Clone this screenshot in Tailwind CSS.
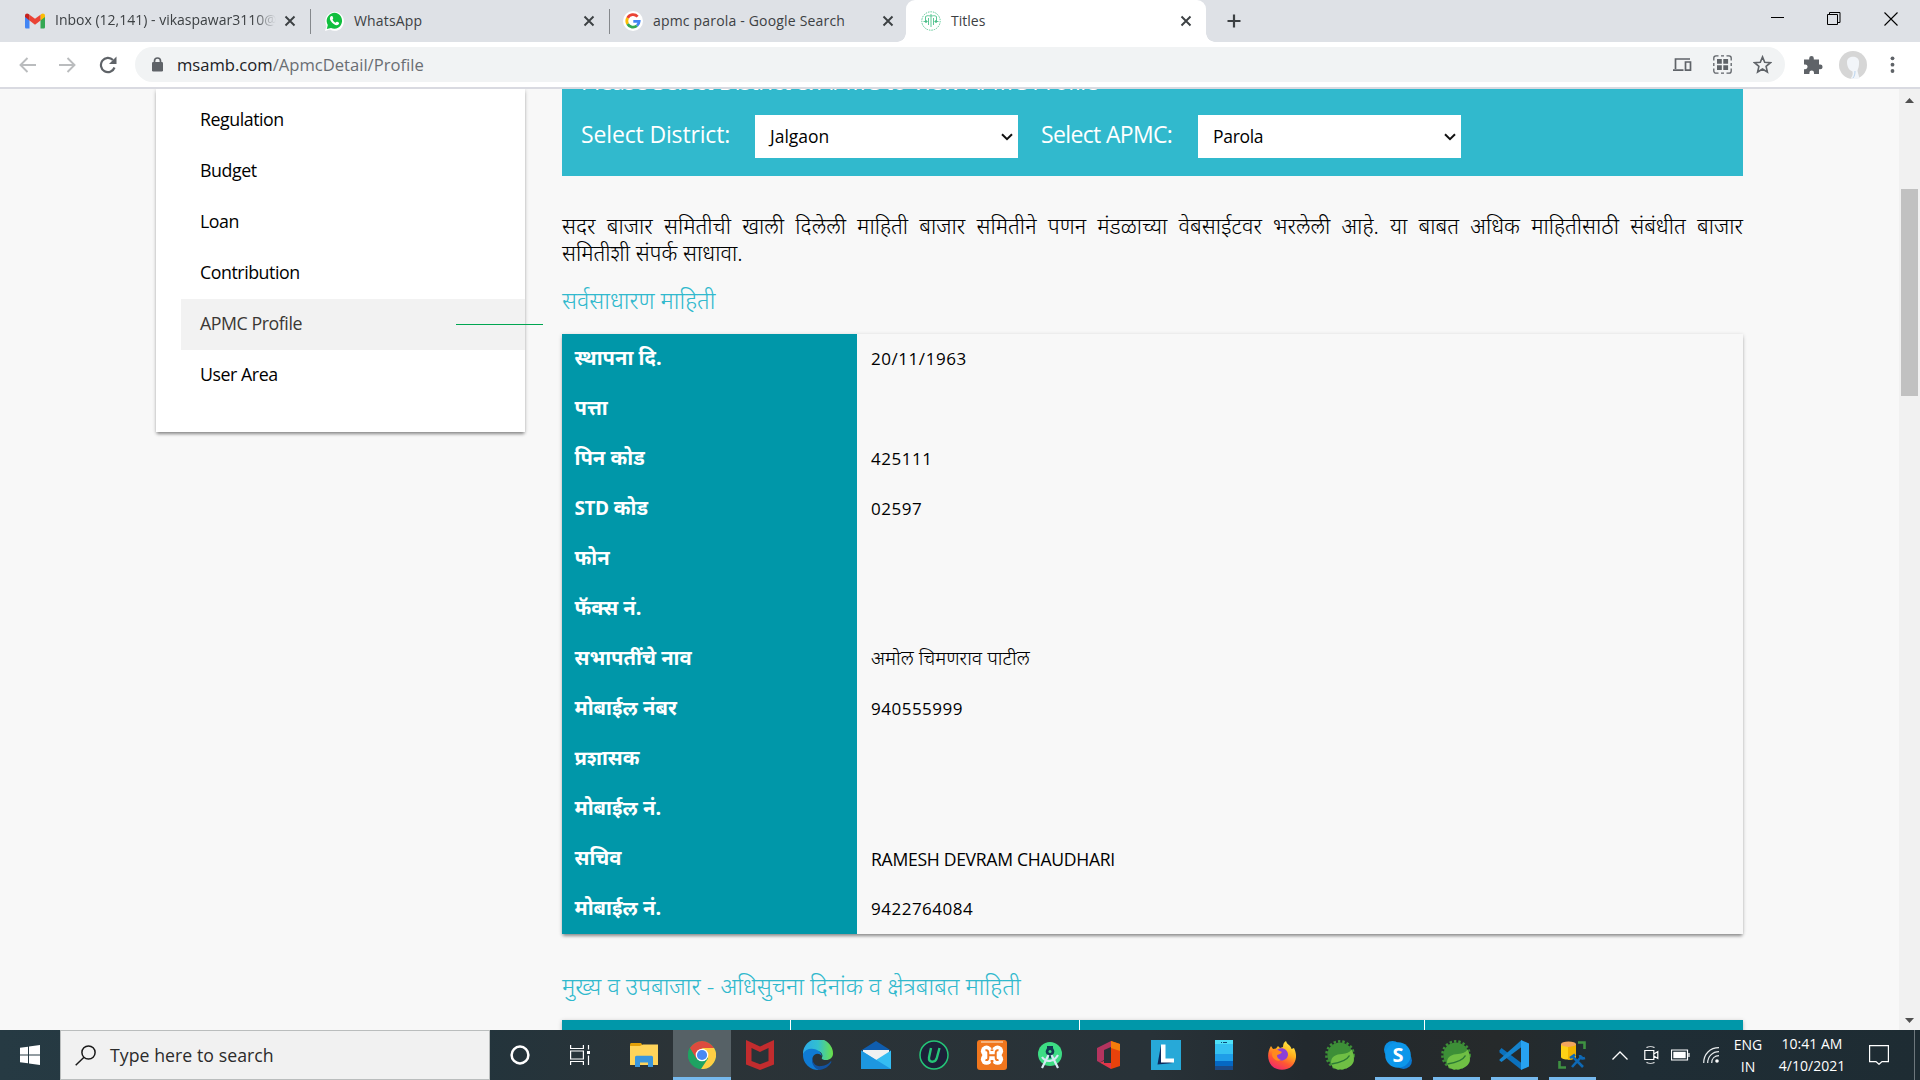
<!DOCTYPE html>
<html lang="mr">
<head>
<meta charset="utf-8">
<title>Titles</title>
<script src="https://cdn.jsdelivr.net/npm/@tailwindcss/browser@4"></script>
</head>
<body class="w-[1920px] h-[1080px] overflow-hidden flex flex-col bg-[#f8f8f8] text-black font-['Open_Sans','Noto_Sans',sans-serif]">

<svg width="0" height="0" class="absolute">
  <defs>
    <symbol id="x" viewBox="0 0 12 12"><path d="M1.5 1.5l9 9M10.5 1.5l-9 9" stroke="#3c4043" stroke-width="1.9" fill="none"/></symbol>
    <symbol id="spring" viewBox="0 0 30 30">
      <circle cx="15" cy="15" r="12.6" fill="#3d8f37"/>
      <circle cx="15" cy="15" r="13.6" fill="none" stroke="#3d8f37" stroke-width="2.6" stroke-dasharray="2.4 2"/>
      <path d="M26.5 9.5C29 14 29.500 18 28.500 22C26.500 27 20 30 13 29.500C8 28.500 6 26 6 22C6.500 16 11 14.500 17 14C21.500 13.500 24.500 12.500 26.500 9.500z" fill="#6fbf44"/>
      <path d="M24.500 15.500C22 20 17 22.500 6.500 24" stroke="#2b7a35" stroke-width="1.500" fill="none"/>
    </symbol>
  </defs>
</svg>

<!-- tab strip -->
<header class="h-[42px] shrink-0 bg-[#dee1e6] flex text-[14px] text-[#3c4043]">
  <div class="w-[311px] flex items-center pl-[25px] relative">
    <svg class="w-[20px] h-[16px] shrink-0" viewBox="0 0 20 15"><path d="M0 3v10.500C0 14.500.6 15 1.500 15H4.500V6z" fill="#4285f4"/><path d="M20 3v10.500c0 1-.6 1.500-1.500 1.500H15.500V6z" fill="#34a853"/><path d="M15.500 1.200V7L20 3.600V2c0-2-2.200-2.700-3.600-1.600z" fill="#fbbc04"/><path d="M4.500 7V1.200L10 5.300l5.500-4.100V7L10 11.200z" fill="#ea4335"/><path d="M0 2v1.600L4.500 7V1.200L3.600.4C2.200-.7 0 0 0 2z" fill="#c5221f"/></svg>
    <span class="ml-[10px] w-[221px] h-[22px] leading-[20px] overflow-hidden whitespace-nowrap [mask-image:linear-gradient(to_right,black_90%,transparent)]">Inbox (12,141) - vikaspawar3110@</span>
    <svg class="w-[12px] h-[12px] ml-[8px]"><use href="#x"/></svg>
    <i class="ml-auto w-px h-[25px] bg-[#85888c]"></i>
  </div>
  <div class="w-[299px] flex items-center pl-[14px]">
    <svg class="w-[19px] h-[20px]" viewBox="0 0 19 20"><path d="M0 20l1.500-5A9.300 9.500 0 1 1 5 18.600z" fill="#fff"/><path d="M1.800 18l1-4A7.700 8 0 1 1 6 17z" fill="#10bf3e"/><path d="M6 5.300C7 4.700 7.500 5 8 6.500c.4 1 .2 1.200-.5 2C8 10 9.300 11.200 10.600 11.700c.7-.8 1-1.200 1.700-.9 1.700.7 2 1 1.700 2C13.200 14.500 11 14.700 8.700 13 6.500 11.500 5 9.500 4.900 7.600 4.900 6.500 5.300 5.700 6 5.300z" fill="#fff"/></svg>
    <span class="ml-[10px] w-[229px] leading-[20px] tracking-[0.150px]">WhatsApp</span>
    <svg class="w-[12px] h-[12px]"><use href="#x"/></svg>
    <i class="ml-auto w-px h-[25px] bg-[#85888c]"></i>
  </div>
  <div class="w-[296px] flex items-center pl-[13px] bg-[#dee1e6]">
    <svg class="w-[20px] h-[20px]" viewBox="0 0 20 20"><circle cx="10" cy="10" r="10" fill="#fff"/><g fill="none" stroke-width="2.800"><path d="M14.600 5.600A6.200 6.200 0 0 0 4.600 7" stroke="#ea4335"/><path d="M4.600 7a6.200 6.200 0 0 0 0 6" stroke="#fbbc05"/><path d="M4.600 13a6.200 6.200 0 0 0 9.400 1.700" stroke="#34a853"/><path d="M14 14.700a6 6 0 0 0 2.200-4.400H10.300" stroke="#4285f4"/></g></svg>
    <span class="ml-[10px] w-[229px] leading-[20px] tracking-[0.180px]">apmc parola - Google Search</span>
    <svg class="w-[12px] h-[12px]"><use href="#x"/></svg>
  </div>
  <div class="w-[300px] flex items-center pl-[15px] bg-white rounded-t-[9px] relative">
    <i class="absolute -left-[9px] bottom-0 w-[9px] h-[9px] bg-[radial-gradient(circle_at_0_0,transparent_8.500px,white_9px)]"></i>
    <i class="absolute -right-[9px] bottom-0 w-[9px] h-[9px] bg-[radial-gradient(circle_at_100%_0,transparent_8.500px,white_9px)]"></i>
    <svg class="w-[20px] h-[20px]" viewBox="0 0 20 20" fill="none" stroke="#5cc896"><circle cx="10" cy="10" r="9.200" stroke-dasharray="1.500 1"/><path d="M10 3v13M4.500 5.500C7 4 8 5 10 5s3-1 5.500.5M4.500 5.500v5M15.500 5.500v5M2.500 10.500h4M13.500 10.500h4M7.500 7v7M12.500 7v7" /><circle cx="5" cy="10.500" r=".9" fill="#1fa060"/><circle cx="15" cy="10.500" r=".9" fill="#1fa060"/></svg>
    <span class="ml-[10px] w-[229px] leading-[20px]">Titles</span>
    <svg class="w-[12px] h-[12px]"><use href="#x"/></svg>
  </div>
  <svg class="w-[16px] h-[16px] mt-[13px] ml-[20px]" viewBox="0 0 16 16"><path d="M8 1.500v13M1.500 8h13" stroke="#3c4043" stroke-width="2.200"/></svg>
  <div class="ml-auto flex mt-[12px] mr-[22px] gap-[43px]">
    <svg class="w-[14px] h-[14px]" viewBox="0 0 14 14"><path d="M1 5.500h13" stroke="#000"/></svg>
    <svg class="w-[14px] h-[14px]" viewBox="0 0 14 14" fill="none" stroke="#000"><path d="M.5 2.500h10v10H.5zM2.500 2.500v-2h10.500v10h-2.500"/></svg>
    <svg class="w-[14px] h-[14px]" viewBox="0 0 14 14"><path d="M.5.500l13 13M13.500.500l-13 13" stroke="#000" stroke-width="1.100"/></svg>
  </div>
</header>

<!-- toolbar -->
<div class="h-[47px] shrink-0 bg-white border-b-2 border-[#d9dae1] flex items-center">
  <svg class="w-[17px] h-[16px] ml-[19px]" viewBox="0 0 17 16" fill="none" stroke="#babcbe" stroke-width="1.900"><path d="M17 8H2M8.500 1L1.500 8l7 7"/></svg>
  <svg class="w-[17px] h-[16px] ml-[23px]" viewBox="0 0 17 16" fill="none" stroke="#babcbe" stroke-width="1.900"><path d="M0 8h15M8.500 1l7 7-7 7"/></svg>
  <svg class="w-[18px] h-[18px] ml-[23px]" viewBox="0 0 18 18"><path d="M15.500 11.500A7 7.200 0 1 1 14 4" fill="none" stroke="#5f6368" stroke-width="2.200"/><path d="M17.500.5v7.500H10z" fill="#5f6368"/></svg>
  <div class="ml-[18px] w-[1650px] h-[35px] rounded-full bg-[#f1f3f4] flex items-center">
    <svg class="w-[11px] h-[15px] ml-[17px]" viewBox="0 0 11 15"><path d="M2.500 6V4a3 3 0 0 1 6 0v2" fill="none" stroke="#5f6368" stroke-width="1.700"/><rect y="5" width="11" height="9.500" rx="1.300" fill="#5f6368"/></svg>
    <span class="ml-[14px] text-[16.600px] leading-[24px] text-[#202124]">msamb.com<span class="text-[#6a6e73]">/ApmcDetail/Profile</span></span>
    <svg class="ml-auto w-[19px] h-[14px]" viewBox="0 0 19 14" fill="none" stroke="#5f6368" stroke-width="1.700"><path d="M17 1H2.500v10M0 12.200h10.500M12.500 4h5v8.200h-5z"/></svg>
    <svg class="ml-[21px] w-[19px] h-[19px]" viewBox="0 0 19 19"><path d="M.8 5.500V3A2.200 2.200 0 0 1 3 .8h2.500M8 .8h3M13.500 .8h2.500A2.200 2.200 0 0 1 18.200 3v2.500M18.200 8v3M18.200 13.500v2.500a2.200 2.200 0 0 1-2.200 2.200h-2.500M11 18.200H8M5.500 18.200H3A2.200 2.200 0 0 1 .8 16v-2.500M.8 11V8" fill="none" stroke="#5f6368" stroke-width="1.300"/><path d="M4 4h4.800v4.800H4zM10.300 4h4.800v4.800h-4.800zM4 10.300h4.800v4.800H4zM10.300 10.300h4.800v4.800h-4.800z" fill="#5f6368"/></svg>
    <svg class="ml-[21px] mr-[13px] w-[19px] h-[19px]" viewBox="0 0 19 19"><path d="M9.500 1.900l2.200 5.300 5.700.500-4.300 3.700 1.300 5.600-4.900-3-4.900 3 1.300-5.600L1.600 7.700l5.700-.500z" fill="none" stroke="#5f6368" stroke-width="1.600"/></svg>
  </div>
  <svg class="ml-[18px] w-[20px] h-[20px]" viewBox="0 0 20 20"><path d="M1 4.500h5.200V3.300a2.300 2.300 0 0 1 4.600 0v1.200H16v5h1.200a2.400 2.400 0 0 1 0 4.800H16V19H11v-1.300a2.300 2.300 0 0 0-4.600 0V19H1v-4.800h1.200a2.400 2.400 0 0 0 0-4.800H1z" fill="#5f6368"/></svg>
  <svg class="ml-[16px] w-[28px] h-[28px]" viewBox="0 0 28 28"><circle cx="14" cy="14" r="14" fill="#d6d6d6"/><path d="M8 11c0-7 13-7 12 1 0 5-1 5-1.500 8l2 7.500c-3 .7-7 .7-9 0 2-2 2.500-4.500 2-7C9.500 19 8 15 8 11z" fill="#f2f5f9"/><path d="M14 27c1.500-2 2-4 2-7" stroke="#b9d3ee" fill="none"/></svg>
  <svg class="ml-[23px] w-[5px] h-[17px]" viewBox="0 0 5 17" fill="#5f6368"><circle cx="2.500" cy="2.300" r="1.900"/><circle cx="2.500" cy="8.700" r="1.900"/><circle cx="2.500" cy="15" r="1.900"/></svg>
</div>

<!-- page -->
<div class="h-[941px] shrink-0 flex overflow-hidden">
  <aside class="ml-[156px] w-[369px] h-[343px] bg-white shadow-[0_3px_3px_-1px_rgba(0,0,0,0.35),0_1px_4px_rgba(0,0,0,0.2)] pt-[6px] pl-[25px] text-[17.800px] tracking-[-0.450px]">
    <div class="h-[51px] pl-[19px] leading-[49px]">Regulation</div>
    <div class="h-[51px] pl-[19px] leading-[49px]">Budget</div>
    <div class="h-[51px] pl-[19px] leading-[49px]">Loan</div>
    <div class="h-[51px] pl-[19px] leading-[49px]">Contribution</div>
    <div class="h-[51px] pl-[19px] leading-[49px] bg-[#f2f2f2] text-[#3c3835] relative">APMC Profile<i class="absolute left-[275px] top-[25px] w-[87px] h-px bg-[#00a651]"></i></div>
    <div class="h-[51px] pl-[19px] leading-[49px]">User Area</div>
  </aside>

  <main class="ml-[37px] w-[1181px]">
    <section class="h-[87px] bg-[#31b9cd] overflow-hidden pl-[19px] text-white text-[23px]">
      <h4 class="-mt-[19px] h-[23px] leading-[23px] font-medium whitespace-nowrap tracking-[-0.500px]">Please Select District &amp; APMC to View APMC Profile</h4>
      <div class="flex mt-[22px] h-[43px]">
        <label class="w-[174px] leading-[38px] font-medium tracking-[-0.150px]">Select District:</label>
        <div class="w-[263px] bg-white text-black text-[17.500px] leading-[40px] pb-[2px] pl-[15px] pr-[5px] flex items-center justify-between">Jalgaon<svg class="w-[12px] h-[8px] mt-[3px]" viewBox="0 0 12 8"><path d="M1 1.200l5 5 5-5" stroke="#111" stroke-width="2" fill="none"/></svg></div>
        <label class="w-[157px] ml-[23px] leading-[38px] font-medium tracking-[-0.650px]">Select APMC:</label>
        <div class="w-[263px] bg-white text-black text-[17.500px] leading-[40px] pb-[2px] pl-[15px] pr-[5px] flex items-center justify-between tracking-[-0.300px]">Parola<svg class="w-[12px] h-[8px] mt-[3px]" viewBox="0 0 12 8"><path d="M1 1.200l5 5 5-5" stroke="#111" stroke-width="2" fill="none"/></svg></div>
      </div>
    </section>

    <div class="mt-[36px] font-['Noto_Sans',sans-serif] text-[21.800px] font-light leading-[27px]">
      <div class="[text-align-last:justify] whitespace-nowrap">सदर बाजार समितीची खाली दिलेली माहिती बाजार समितीने पणन मंडळाच्या वेबसाईटवर भरलेली आहे. या बाबत अधिक माहितीसाठी संबंधीत बाजार</div>
      <div>समितीशी संपर्क साधावा.</div>
    </div>
    <h3 class="mt-[17px] h-[51px] leading-[34px] font-['Noto_Sans',sans-serif] font-light text-[23.400px] text-[#31b9cd]">सर्वसाधारण माहिती</h3>

    <div class="h-[600px] flex shadow-[0_3px_3px_-1px_rgba(0,0,0,0.35),0_1px_4px_rgba(0,0,0,0.18)] bg-[#f8f8f8]">
      <div class="w-[295px] bg-[#0097a9] pl-[12.500px] text-white font-bold font-['Noto_Sans',sans-serif] text-[20.200px] leading-[47px]">
        <div class="h-[50px]">स्थापना दि.</div>
        <div class="h-[50px]">पत्ता</div>
        <div class="h-[50px]">पिन कोड</div>
        <div class="h-[50px]"><span class="font-['Open_Sans'] font-bold text-[19px] tracking-[-0.500px]">STD</span> कोड</div>
        <div class="h-[50px]">फोन</div>
        <div class="h-[50px]">फॅक्स नं.</div>
        <div class="h-[50px]">सभापतींचे नाव</div>
        <div class="h-[50px]">मोबाईल नंबर</div>
        <div class="h-[50px]">प्रशासक</div>
        <div class="h-[50px]">मोबाईल नं.</div>
        <div class="h-[50px]">सचिव</div>
        <div class="h-[50px]">मोबाईल नं.</div>
      </div>
      <div class="pl-[14px] text-[17px] leading-[50px]">
        <div class="h-[100px] tracking-[0.550px]">20/11/1963</div>
        <div class="h-[50px] tracking-[0.550px]">425111</div>
        <div class="h-[150px] tracking-[0.500px]">02597</div>
        <div class="h-[50px] text-[19.500px] font-light font-['Noto_Sans',sans-serif] leading-[47px]">अमोल चिमणराव पाटील</div>
        <div class="h-[150px] tracking-[0.500px]">940555999</div>
        <div class="h-[50px] text-[17.600px] tracking-[-0.300px]">RAMESH DEVRAM CHAUDHARI</div>
        <div class="h-[50px] tracking-[0.500px]">9422764084</div>
      </div>
    </div>

    <h3 class="mt-[34px] h-[52px] leading-[37px] font-['Noto_Sans',sans-serif] font-light text-[23.500px] text-[#31b9cd] whitespace-nowrap">मुख्य व उपबाजार - अधिसुचना दिनांक व क्षेत्रबाबत माहिती</h3>
    <div class="h-[60px] flex gap-px bg-white shadow-[0_1px_4px_rgba(0,0,0,0.25)]">
      <div class="w-[228px] bg-[#0097a9]"></div>
      <div class="w-[288px] bg-[#0097a9]"></div>
      <div class="w-[344px] bg-[#0097a9]"></div>
      <div class="flex-1 bg-[#0097a9]"></div>
    </div>
  </main>

  <div class="ml-auto w-[21px] bg-[#f1f1f1] flex flex-col items-center">
    <svg class="w-[9px] h-[5px] mt-[9px]" viewBox="0 0 9 5"><path d="M0 5L4.500 0 9 5z" fill="#505050"/></svg>
    <div class="mt-[86px] w-[17px] h-[207px] bg-[#c1c1c1]"></div>
    <svg class="w-[9px] h-[5px] mt-auto mb-[7px]" viewBox="0 0 9 5"><path d="M0 0l4.500 5L9 0z" fill="#505050"/></svg>
  </div>
</div>

<!-- taskbar -->
<footer class="h-[50px] shrink-0 flex items-stretch bg-[linear-gradient(90deg,#263a43_0%,#23343c_25%,#2b3337_35%,#283238_60%,#22292e_68%,#262a2b_78%,#1f2d35_85%,#1e2c33_100%)]">
  <div class="w-[60px] flex items-center justify-center"><svg class="w-[20px] h-[20px]" viewBox="0 0 20 20" fill="#fff"><path d="M0 2.800L8 1.700v7.800H0zM9 1.500L20 0v9.500H9zM0 10.500h8v7.800L0 17.200zM9 10.500h11V20L9 18.500z"/></svg></div>
  <div class="w-[430px] bg-[#f1f1f1] border border-[#babdbd] flex items-center text-[17.700px] text-[#2b2b2b]">
    <svg class="w-[21px] h-[21px] ml-[14px]" viewBox="0 0 21 21" fill="none" stroke="#1a1a1a" stroke-width="1.500"><circle cx="13.500" cy="7.500" r="6.600"/><path d="M9 12.200L.700 20.300"/></svg>
    <span class="ml-[14px] leading-[24px] tracking-[0.050px]">Type here to search</span>
  </div>
  <div class="w-[60px] flex items-center justify-center"><svg class="w-[20px] h-[20px]" viewBox="0 0 20 20"><circle cx="10" cy="10" r="8.400" fill="none" stroke="#fff" stroke-width="2.500"/></svg></div>
  <div class="w-[65px] flex items-center pl-[20px]"><svg class="w-[21px] h-[20px]" viewBox="0 0 21 20" fill="none" stroke="#fff" stroke-width="1.200"><path d="M.6 0v3.500h12.800V0M.6 20v-3.500h12.800V20M.6 6h12.800v8H.6zM18.500 0v4.500M18.500 10.500V20"/><path d="M17 6h3v3h-3z" fill="#fff" stroke="none"/></svg></div>

  <div class="w-[58px] flex items-center justify-center"><svg class="w-[28px] h-[26px]" viewBox="0 0 28 24"><path d="M0 1.500C0 .6.500 0 1.500 0H11l2.500 3.500H0z" fill="#e2a008"/><path d="M0 3h10l3-1.500h15V22H0z" fill="#ffd45a"/><path d="M5 24V14.500c0-1 .6-1.700 1.500-1.700h15c.9 0 1.500.7 1.500 1.700V24h-5v-4.500h-8V24z" fill="#3a96dd"/></svg></div>
  <div class="w-[58px] flex items-center justify-center bg-[#566166] border-b-[3px] border-[#76b9ed] pt-[3px]"><svg class="w-[28px] h-[28px]" viewBox="0 0 28 28"><circle cx="14" cy="14" r="14" fill="#1ea362"/><path d="M14 14L1.900 7A14 14 0 0 1 26.100 7H14z" fill="#dd4b3e"/><path d="M26.100 7A14 14 0 0 1 13 28l7-10.500L14 7z" fill="#ffce44"/><path d="M1.900 7L8.500 18 14 14V7z" fill="#dd4b3e"/><path d="M1.900 7L8 17.500 14 21l-1 7A14 14 0 0 1 1.900 7z" fill="#1ea362"/><circle cx="14" cy="14" r="6.300" fill="#fff"/><circle cx="14" cy="14" r="5.100" fill="#4a8af4"/></svg></div>
  <div class="w-[58px] flex items-center justify-center"><svg class="w-[28px] h-[30px]" viewBox="0 0 28 30"><path d="M0 0l14 6.500L28 0v24.500L14 30 0 24.500zM5.500 8v13L14 24.300 22.500 21V8L14 12z" fill="#c22c2e" fill-rule="evenodd"/></svg></div>
  <div class="w-[58px] flex items-center justify-center"><svg class="w-[30px] h-[30px]" viewBox="0 0 30 30"><defs><linearGradient id="e1" x1="0" x2="1"><stop offset="0" stop-color="#2aa9ea"/><stop offset=".5" stop-color="#33c0cf"/><stop offset="1" stop-color="#6be047"/></linearGradient></defs><path d="M0 14A15 15 0 0 1 30 13.500c0 4-3 6.500-7 6.500-3 0-5-1-4-2.500C20.500 15 18 11 14 11z" fill="url(#e1)"/><path d="M0 14C2 9 8 7.500 13 9.500c4 1.500 6 4.500 5.500 6.500C17 13 11 12.500 9.500 18c-1 5 2.500 10 7 11.900A15 15 0 0 1 0 14z" fill="#0f7bd4"/><path d="M10 17c-1.500 6 3 10 8.500 9 4-.5 7-2 9-4.500.6-.5 1.200 0 .8.800C26 26.500 21 30 16 30 10 28 7.500 21 10 17z" fill="#12529f"/></svg></div>
  <div class="w-[58px] flex items-center justify-center"><svg class="w-[30px] h-[28px]" viewBox="0 0 30 28"><path d="M0 9.500L15 0l15 9.500z" fill="#0f5dae"/><path d="M2 9h26v12H2z" fill="#f1f1f1"/><path d="M0 9.500L15 19l15-9.500V28H0z" fill="#35bdf2"/><path d="M0 9.500L30 28H0z" fill="#1d97e0"/></svg></div>
  <div class="w-[58px] flex items-center justify-center"><svg class="w-[30px] h-[30px]" viewBox="0 0 30 30"><circle cx="15" cy="15" r="14" fill="#1c2038" stroke="#25c477" stroke-width="1.500"/><path d="M12 8L10 17.500c-.8 5.500 6.500 5.500 7.800.5L20.500 8" fill="none" stroke="#25c477" stroke-width="2.400"/></svg></div>
  <div class="w-[58px] flex items-center justify-center"><svg class="w-[30px] h-[30px]" viewBox="0 0 30 30"><rect width="30" height="30" rx="3" fill="#f0761d"/><path d="M4 2h22" stroke="#f9c79b" stroke-width="1.500"/><g fill="#fff"><circle cx="9.500" cy="11.200" r="5.600"/><circle cx="20.500" cy="11.200" r="5.600"/><circle cx="9.500" cy="19.200" r="5.600"/><circle cx="20.500" cy="19.200" r="5.600"/><path d="M8 10h14v10H8z"/></g><path d="M8.500 10.500c2-.8 2.800.8 2.800 2.300v5c0 1.500-.8 2.800-2.800 2M21.500 10.500c-2-.8-2.800.8-2.800 2.300v5c0 1.500.8 2.800 2.800 2M11.300 15.200h7.400" fill="none" stroke="#f0761d" stroke-width="2"/><path d="M13.600 9.500h2.800v1.500h-2.800zM13.600 20h2.800v2h-2.800zM3 14.500h2v1.400H3zM25 14.500h2v1.400h-2z" fill="#f0761d"/></svg></div>
  <div class="w-[58px] flex items-center justify-center"><svg class="w-[24px] h-[27px]" viewBox="0 0 24 27"><circle cx="12" cy="12" r="12" fill="#3ddc84"/><path d="M9 4h6v8l-3 5-3-5z" fill="#123a50"/><circle cx="12" cy="9.500" r="4.300" fill="#123a50"/><path d="M10.500 13L4 26M13.500 13L20 26M4 15c4 6 12 5 16-2" fill="none" stroke="#d7e9f5" stroke-width="2.200"/><circle cx="12" cy="9.500" r="1.500" fill="#3ddc84"/></svg></div>
  <div class="w-[58px] flex items-center justify-center"><svg class="w-[23px] h-[28px]" viewBox="0 0 23 28"><path d="M0 7L14 0v6L7 9v10l-4 2.500L0 20z" fill="#b5345f"/><path d="M0 20l3 1.500L7 20v2h7v6z" fill="#e0364b"/><path d="M14 0l9 3v22l-9 3z" fill="#e8420b"/><path d="M14 0l9 3v7l-9-3z" fill="#f57c0b"/></svg></div>
  <div class="w-[58px] flex items-center justify-center"><svg class="w-[30px] h-[30px]" viewBox="0 0 30 30"><path d="M0 0h30v30H0z" fill="#27a9d8"/><path d="M10 5L6.500 24.500 22 23l-12-3z" fill="#0b2a5c"/><path d="M10 4.500h4.500v14H23v4H10z" fill="#fff"/></svg></div>
  <div class="w-[58px] flex items-center justify-center"><svg class="w-[18px] h-[30px]" viewBox="0 0 18 30"><path d="M0 0h18v30H0z" fill="#35c1f1"/><path d="M0 0h18v4H0z" fill="#4fe0f7"/><path d="M0 14h18v7H0z" fill="#1f9ee8"/><path d="M0 21h18v5H0z" fill="#0568c4"/><path d="M0 26h18v4H0z" fill="#1b4a87"/><path d="M6 2.500h1M8 2.500h4" stroke="#0b4a7a"/></svg></div>
  <div class="w-[58px] flex items-center justify-center"><svg class="w-[28px] h-[29px]" viewBox="0 0 28 29"><defs><linearGradient id="f1" x1=".8" y1="0" x2=".3" y2="1"><stop offset="0" stop-color="#fff04a"/><stop offset=".4" stop-color="#ffae1c"/><stop offset=".7" stop-color="#ff5733"/><stop offset="1" stop-color="#f0286e"/></linearGradient></defs><path d="M3 5l2 3 3-.5L10 5l2 2 3-1c0-3 1-5 3-6 1 4 5 4 5.500 8L26 7c3 6 3 13-2 18-5 5-15 5-20 0C-1 20-1 11 3 5z" fill="url(#f1)"/><path d="M9 9c4-4 11-1 11 4.500 0 5-7 8.500-11 4-1.500-2-1-4 2-4.500z" fill="#8b3fd9"/><path d="M5 9c3-1 5 0 9 2-1 2-3 2-5 3 0 3 1.500 4 4 5-4 2-9-1-9-6z" fill="#ff8a1e"/></svg></div>
  <div class="w-[58px] flex items-center justify-center"><svg class="w-[30px] h-[30px]"><use href="#spring"/></svg></div>
  <div class="w-[58px] flex items-center justify-center relative"><svg class="w-[28px] h-[28px]" viewBox="0 0 28 28"><circle cx="8.500" cy="8.500" r="8.500" fill="#0c8fe2"/><circle cx="19.500" cy="19.500" r="8.500" fill="#0a77d0"/><circle cx="14" cy="14" r="12.800" fill="#0d97ea"/><text x="14" y="21" text-anchor="middle" class="text-[20px] font-bold" fill="#fff">S</text></svg><i class="absolute bottom-0 left-[6px] w-[47px] h-[3px] bg-[#76b9ed]"></i></div>
  <div class="w-[58px] flex items-center justify-center relative"><svg class="w-[30px] h-[30px]"><use href="#spring"/></svg><i class="absolute bottom-0 left-[6px] w-[47px] h-[3px] bg-[#76b9ed]"></i></div>
  <div class="w-[58px] flex items-center justify-center relative"><svg class="w-[30px] h-[30px]" viewBox="0 0 30 30"><path d="M.5 10.500L2.500 8l20 15V30L.5 12.500z" fill="#0b71bd"/><path d="M.5 19.500L22.500 0v7L2.500 22 .5 20.500z" fill="#1583cd"/><path d="M22 0l8 3.500v23L22 30z" fill="#27a2f0"/></svg><i class="absolute bottom-0 left-[6px] w-[47px] h-[3px] bg-[#76b9ed]"></i></div>
  <div class="w-[58px] flex items-center justify-center relative"><svg class="w-[28px] h-[28px]" viewBox="0 0 28 28"><path d="M3 3v13c0 3.500 15 3.500 15 0V3z" fill="#fcd116"/><path d="M10 3h8v13c0 2-4 2.700-8 2.700z" fill="#f0b400"/><ellipse cx="10.500" cy="3.200" rx="7.500" ry="2.700" fill="#f2a65e"/><path d="M20 1.500h6.500V8M1.500 20v6.500H8" fill="none" stroke="#3f9142" stroke-width="2.600"/><path d="M14 26l10-11M25 26L15 16M12 17l5-3.500M22 14c0 3 2 4 5 3" fill="none" stroke="#0e69b5" stroke-width="2.600"/></svg><i class="absolute bottom-0 left-[6px] w-[47px] h-[3px] bg-[#76b9ed]"></i></div>

  <div class="w-[38px] flex items-center justify-center"><svg class="w-[16px] h-[9px]" viewBox="0 0 16 9"><path d="M.5 8.500L8 1l7.500 7.500" fill="none" stroke="#fff" stroke-width="1.300"/></svg></div>
  <div class="w-[24px] flex items-center justify-center"><svg class="w-[15px] h-[18px]" viewBox="0 0 15 18" fill="none" stroke="#fff" stroke-width="1.200"><path d="M.8 4.500h9v9h-9zM9.800 8l4-2.500v7L9.800 10M2.500 1.500C4.500.5 8.500.5 10.500 1.500M2.500 16.500c2 1 6 1 8 0"/></svg></div>
  <div class="w-[34px] flex items-center justify-center"><svg class="w-[19px] h-[12px]" viewBox="0 0 19 12"><path d="M.5 1h16v10H.5zM18 4v4" fill="none" stroke="#fff" stroke-width="1.200"/><path d="M2.300 2.800h12.400v6.400H2.300z" fill="#fff"/></svg></div>
  <div class="w-[28px] flex items-center justify-center"><svg class="w-[16px] h-[16px]" viewBox="0 0 16 16" fill="none" stroke="#e8ecee" stroke-width="1.200"><path d="M.7 16C.7 7 7 .7 16 .7M4.700 16C4.700 9.500 9.500 4.700 16 4.700M8.700 16c0-4.500 3-7.300 7.300-7.300"/><circle cx="14" cy="14" r="1.800" fill="#fff" stroke="none"/></svg></div>
  <div class="w-[46px] pt-[4px] text-[14px] leading-[22px] text-white text-center">ENG<br>IN</div>
  <div class="w-[82px] pt-[3px] text-[14px] leading-[22px] text-white text-center">10:41 AM<br>4/10/2021</div>
  <div class="w-[52px] flex items-center justify-center"><svg class="w-[20px] h-[20px]" viewBox="0 0 20 20"><path d="M.6.600h18.800v16H13L10 19.300 7 16.600H.6z" fill="none" stroke="#fff" stroke-width="1.200"/></svg></div>
  <i class="ml-[9px] w-px bg-[#6d777c]"></i>
</footer>
</body>
</html>
